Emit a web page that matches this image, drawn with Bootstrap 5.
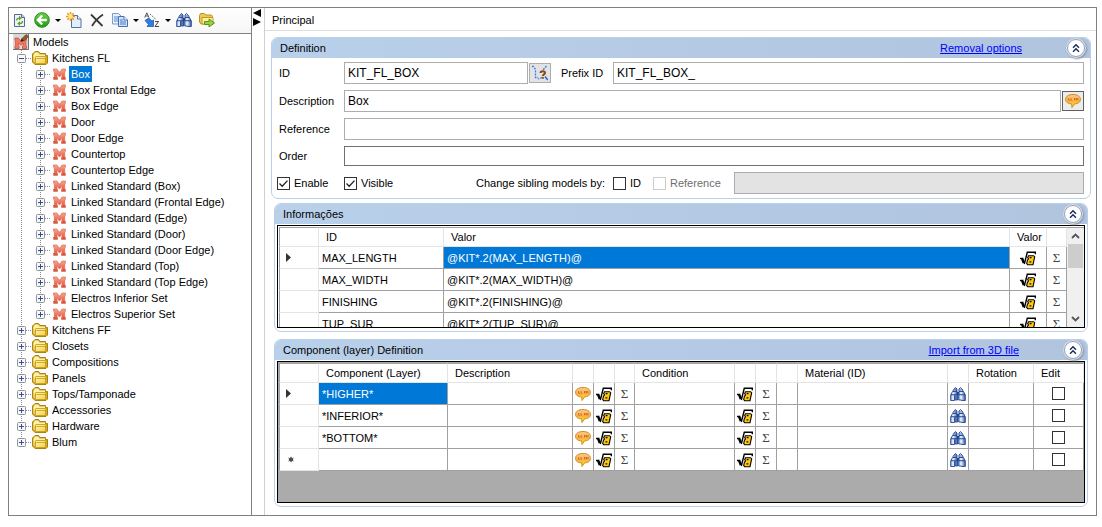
<!DOCTYPE html>
<html lang="en">
<head>
<meta charset="utf-8">
<meta name="viewport" content="width=device-width, initial-scale=1">
<title>Models</title>
<link href="https://cdn.jsdelivr.net/npm/bootstrap@5.3.0/dist/css/bootstrap.min.css" rel="stylesheet">
<style>
  :root { --dots: #8c8c8c; --line: #a0a0a0; --soft: #e4e4e4; --pick: #0078d7; }
  body { font-family: "Liberation Sans", Arial, sans-serif; font-size: 11px; line-height: 16px; color: #000; background: #fff; padding: 7px 5px 8px 8px; }
  svg { display: block; flex: none; }
  button { font: inherit; color: inherit; padding: 0; border: 0; background: none; }
  .app-frame { border: 1px solid #808080; }

  /* left pane */
  .side-pane { width: 243px; flex: none; border-right: 1px solid #808080; }
  .tool-strip { height: 26px; border-bottom: 1px solid #808080; gap: 7px; padding: 0 0 2px 2px; background: linear-gradient(#fff, #f6f6f6); }
  .drop-caret { width: 16px; height: 16px; }
  .drop-caret::after { content: ""; display: block; margin: 1px auto 0; width: 0; border: 3px solid transparent; border-top-color: #000; border-bottom: 0; }
  .tree-line { display: flex; align-items: center; height: 16px; white-space: nowrap; background-repeat: repeat-y; }
  .tree-list > li > .tree-line { padding-left: 8px; background-image: repeating-linear-gradient(var(--dots) 0 1px, transparent 1px 2px); background-size: 1px 2px; background-position: 12px 0; }
  .tree-list > li:last-child > .tree-line { background-size: 1px 8px; background-repeat: no-repeat; }
  .tree-sub > li { background: repeating-linear-gradient(var(--dots) 0 1px, transparent 1px 2px) 12px 0 / 1px 2px repeat-y; }
  .tree-sub > li > .tree-line { padding-left: 27px; background-image: repeating-linear-gradient(var(--dots) 0 1px, transparent 1px 2px); background-size: 1px 2px; background-position: 31px 0; }
  .tree-sub > li:last-child > .tree-line { background-size: 1px 8px; background-repeat: no-repeat; }
  .tree-stem { flex: none; height: 1px; width: 6px; background: repeating-linear-gradient(90deg, var(--dots) 0 1px, transparent 1px 2px); }
  .tree-sub .tree-stem { margin-right: 2px; }
  .tree-text { padding: 0 2px; line-height: 16px; margin-left: 2px; }
  .tree-sub .tree-text { margin-left: 3px; }
  .tree-text.picked { background: var(--pick); color: #fff; }
  .splitter { width: 12px; flex: none; }

  /* right pane */
  .main-pane { border-left: 1px solid #d0d0d0; }
  .tab-strip { height: 23px; border-bottom: 1px solid #dcdcdc; padding: 4px 7px 0; }
  .panel-box { border: 1px solid #b9cfea; border-radius: 7px; overflow: hidden; }
  .panel-wide { margin: 6px 5px 0 6px; }
  .panel-slim { margin: 0 8px 0 9px; }
  .panel-last { margin-top: 7px; }
  .panel-head { height: 20px; background: linear-gradient(90deg, #b9d0eb, #b0c4de); padding: 0 5px 1px 8px; }
  .panel-head a { color: #00f; margin-right: 45px; }
  .fold-btn { width: 18px; height: 18px; border-radius: 50%; background: #fff; border: 1px solid #96a3b8; box-shadow: 0 0 0 1px #d8e0ec, 1px 1px 2px 1px #8492a8; display: grid; place-items: center; }
  .form-area { padding: 4px 6px 4px 7px; gap: 6px; }
  .form-area .cap { width: 65px; flex: none; }
  .text-in { height: 22px; border: 1px solid #abadb3; border-radius: 0; padding: 0 3px; font-size: 12px; color: #000; background: #fff; outline: 0; min-width: 0; }
  .text-in.dark { height: 20px; border-color: #707070; }
  .text-in:disabled { background: #e3e3e3; }
  .id-in { width: 184px; flex: none; }
  .icon-btn { width: 22px; height: 20px; border: 1px solid #adadad; background: #e3e3e3; display: grid; place-items: center; margin-left: 1px; flex: none; }
  .icon-btn.dark { border-color: #606060; background: #ececec; }
  .prefix-cap { width: 62px; padding-left: 10px; flex: none; }
  .check-row { margin-left: -2px; height: 22px; }
  .check-row label { display: flex; align-items: center; gap: 4px; }
  .check-left { width: 336px; flex: none; }
  .check-left label { width: 67px; }
  .ref-check { margin-left: 12px; width: 81px; color: #6d6d6d; }
  .id-check { width: 28px; }
  .tick { appearance: none; width: 13px; height: 13px; margin: 0; border: 1px solid #333; background: #fff center / 11px 11px no-repeat; flex: none; }
  .tick:checked { background-image: url("data:image/svg+xml,%3Csvg xmlns='http://www.w3.org/2000/svg' viewBox='0 0 11 11'%3E%3Cpath d='M1.5 5.5l2.7 2.7 5.3-5.6' fill='none' stroke='%23222' stroke-width='1.3'/%3E%3C/svg%3E"); }
  .tick:disabled { border-color: #ccc; }

  /* grids */
  .grid-box { border: 1px solid #000; margin: 1px 2px 3px 2px; padding: 1px 0 0 1px; overflow: hidden; }
  .grid-short { height: 103px; }
  .grid-tall { height: 142px; background: #ababab; }
  .grid-table { table-layout: fixed; width: 100%; border-collapse: separate; border-spacing: 0; background: #fff; }
  .grid-table th, .grid-table td { height: 22px; padding: 0 3px; border: 0 solid var(--line); border-width: 0 1px 1px 0; white-space: nowrap; overflow: hidden; vertical-align: middle; line-height: 16px; }
  .grid-table thead th { height: 20px; border-top-width: 1px; font-weight: 400; padding-left: 7px; border-right-color: var(--soft); border-bottom-color: var(--soft); border-top-color: var(--line); }
  .grid-table tr > :first-child { border-left-width: 1px; border-right-color: var(--soft); border-bottom-color: var(--soft); padding-left: 5px; }
  .grid-table td.ico { padding: 0; }
  .grid-table td.ico > * { margin: 0 auto; display: block; }
  .grid-table td.picked { background: var(--pick); color: #fff; }
  .grid-table .sum { width: 100%; text-align: center; font-family: "Liberation Serif", serif; font-size: 13px; color: #444; }
  .scroll-bar { width: 17px; flex: none; background: #f0f0f0; border-top: 1px solid var(--line); }
  .scroll-bar button { height: 16px; display: grid; place-items: center; }
  .scroll-thumb { height: 24px; background: #cdcdcd; margin: 0 1px; }
</style>
</head>
<body>
<svg width="0" height="0" class="position-absolute" aria-hidden="true">
  <defs>
    <linearGradient id="gFold" x1="0" y1="0" x2="1" y2="1"><stop offset="0" stop-color="#fffab8"/><stop offset="1" stop-color="#f6cf45"/></linearGradient>
    <linearGradient id="gTalk" x1="0" y1="0" x2="0" y2="1"><stop offset="0" stop-color="#fbc98c"/><stop offset=".5" stop-color="#f9b04a"/><stop offset=".8" stop-color="#ffd91e"/></linearGradient>
    <linearGradient id="gGreen" x1="0" y1="0" x2="0" y2="1"><stop offset="0" stop-color="#6fd04c"/><stop offset="1" stop-color="#1e9a12"/></linearGradient>
    <linearGradient id="gBin" x1="0" y1="0" x2="1" y2="0"><stop offset="0" stop-color="#7fa6dc"/><stop offset=".35" stop-color="#f2f8ff"/><stop offset="1" stop-color="#2c58a8"/></linearGradient>
    <linearGradient id="gM" x1="0" y1="0" x2="0" y2="1"><stop offset="0" stop-color="#f9a68e"/><stop offset="1" stop-color="#dc4a34"/></linearGradient>
    <symbol id="i-folder" viewBox="0 0 16 14"><path d="M.5 11V3L2 1.500 3 .5h3.500L8 2.500h5.500v2h2V12L14 13.500H3z" fill="#d9a920" stroke="#a9820f"/><path d="M1.500 10V4l1.500-2.500h3L7.500 3.500h5.500v1.500H4L2.500 7v4z" fill="#fdf3a8"/><path d="M3.500 11.500V6l1-.5h9v7h-9z" fill="url(#gFold)" stroke="#c59b1e" stroke-width=".8"/><path d="M4.200 7.500h9" fill="none" stroke="#c59b1e" stroke-width=".8"/></symbol>
    <symbol id="i-m" viewBox="0 0 13 12"><path d="M.6 1h3.200l2.700 3.300L9.200 1h3.200v2.200l-.7.500v5l.7.500v2.200H8.500V9.200l.6-.5V6.300L6.500 9 3.900 6.300v2.400l.6.500v2.200H.6V9.200l.7-.5v-5l-.7-.5z" fill="url(#gM)" stroke="#e0705a" stroke-width=".8"/></symbol>
    <symbol id="i-plus" viewBox="0 0 9 9"><rect x=".5" y=".5" width="8" height="8" rx="1" fill="#f8f8f8" stroke="#919191"/><path d="M2 4.500h5M4.500 2v5" stroke="#2c4f9e"/></symbol>
    <symbol id="i-minus" viewBox="0 0 9 9"><rect x=".5" y=".5" width="8" height="8" rx="1" fill="#f8f8f8" stroke="#919191"/><path d="M2 4.500h5" stroke="#2c4f9e"/></symbol>
    <symbol id="i-root" viewBox="0 0 16 16"><path d="M0 0h16v16H0z" fill="#d9d9d9"/><path d="M15.500 0v15.500H0" fill="none" stroke="#707070"/><path d="M2 4h3.300L8 7l2.700-3H13.500v2.500l-.6.500v4.500l.6.500v2.500h-4V12l.7-.5V9L8 11.300 5.300 9v2.500l.7.500v2.500H2V12l.6-.5V7L2 6.500z" fill="#ee7a66" stroke="#cf4d38" stroke-width=".8"/><path d="M8.500 5L13 .5l2.500 2L11 7z" fill="#8a5a2a" stroke="#5b3614" stroke-width=".6"/><path d="M7.500 7.800l1-3L11 7z" fill="#222"/></symbol>
    <symbol id="i-refresh" viewBox="0 0 16 16"><path d="M3.500 2.500h7.500l2.500 3v9h-10z" fill="#eef3fb" stroke="#596a8c"/><path d="M10.500 2.500v3h3" fill="#cfd9ea" stroke="#596a8c"/><path d="M5.500 8.500c0-1.600 1.200-2.300 3-2.300M11.500 9c0 1.800-1.200 2.600-3 2.600" fill="none" stroke="#55a320" stroke-width="1.300"/><path d="M8 3.800l2.700 2.400L8 8.500zM9 14l-2.700-2.400L9 9.300z" fill="#55a320"/></symbol>
    <symbol id="i-back" viewBox="0 0 16 16"><circle cx="8" cy="8" r="7.300" fill="url(#gGreen)" stroke="#2b8a20"/><path d="M8.200 3.500L3.800 8l4.400 4.500M4.500 8h8.300" fill="none" stroke="#fff" stroke-width="2.300"/></symbol>
    <symbol id="i-new" viewBox="0 0 16 16"><path d="M5.500 3.500h6l3.500 3.500v8.500h-9.500z" fill="#e3eefb" stroke="#56719f"/><path d="M11.500 3.500v3.500h3.500" fill="#fff" stroke="#56719f"/><path d="M4.500 0v9M0 4.500h9M1.300 1.300l6.400 6.400M7.700 1.300L1.300 7.700" stroke="#f09018" stroke-width="1.500"/><circle cx="4.500" cy="4.500" r="2.400" fill="#ffe978"/></symbol>
    <symbol id="i-cut" viewBox="0 0 16 16"><path d="M2 2.500c3 3 7 7 11.500 11.500M14 2.500C9.500 5.500 5.500 9.500 3 14" fill="none" stroke="#3a3a3a" stroke-width="1.800"/></symbol>
    <symbol id="i-copy" viewBox="0 0 16 16"><path d="M.5 1.500h6l3 3v7.500h-9z" fill="#e6f0fd" stroke="#7d9ccc"/><path d="M2 5h4M2 7h4M2 9h4" stroke="#5d8bd0"/><path d="M6.500 4.500h5.500l3.500 3.500v6.500h-9z" fill="#cfe2fb" stroke="#4a6fae"/><path d="M12 4.500v3.500h3.500" fill="#fff" stroke="#4a6fae"/><path d="M8 8h3M8 10h6M8 12h6" stroke="#4a7dcc"/></symbol>
    <symbol id="i-sort" viewBox="0 0 16 16"><path d="M.7 5.500L2.800.8 5 5.500M1.500 4h2.700" fill="none" stroke="#555"/><path d="M11 9.500h3.500l-3.500 5h4" fill="none" stroke="#444"/><path d="M6 2l6 5.500" fill="none" stroke="#666" stroke-dasharray="1.500 1"/><path d="M1 8.500L4.500 6 8 9l1.500-1v6.500H3l1.500-2z" fill="#2e7fe0" stroke="#174f9e" stroke-width=".7"/></symbol>
    <symbol id="i-bin" viewBox="0 0 16 16"><path d="M7 6h2.500v3H7z" fill="#1d3f86"/><path d="M4 3l1.500-1.500L7 3v3l.5 2.500v5.500H5.200V9.500H4.500V14.500H.7V9L2.500 5.500z" fill="url(#gBin)" stroke="#24468e" stroke-width=".9"/><path d="M9 3l1.500-1.500L12 3l1.500 2.500L15.300 9v5.500H11.500V14H8.700V8.500L9 6z" fill="url(#gBin)" stroke="#24468e" stroke-width=".9"/><path d="M3 5.500h4M9 5.500h4M1 8.700h6.500M8.800 8.700h6.300" stroke="#24468e" stroke-width="1.100"/><path d="M5 2.500v3M11 2.500v3" stroke="#4e7cc4"/></symbol>
    <symbol id="i-go" viewBox="0 0 16 16"><path d="M.5 10V3.500L1.500 1.500h4L7 3h5.500l1 1.500V11l-1 1H2z" fill="#efc850" stroke="#bb9220"/><path d="M3 5.500h11v6.500H3z" fill="#fff0a0" stroke="#c39a25"/><path d="M5.500 9.500h4.500V7l5.500 4-5.500 4v-2.500H5.500z" fill="#9ad03c" stroke="#4e8a17" stroke-width=".9"/></symbol>
    <symbol id="i-talk" viewBox="0 0 16 14"><path d="M8 .5c4.500 0 7.500 2 7.500 4.900 0 2.700-2.600 4.300-6 4.500L7 13.500l-.3-3.600C3 9.700.5 8 .5 5.400.5 2.500 3.500.5 8 .5z" fill="url(#gTalk)" stroke="#c98d22"/><path d="M3.500 4v2.200H5M6 4v2.200h1M9.500 4v2.300M11.300 4v2.300M13 4v2.300M9 5h4" fill="none" stroke="#cf6a20" stroke-width=".9"/></symbol>
    <symbol id="i-root2" viewBox="0 0 16 16"><path d="M8.500 5.700h5l1.200 1-1.700 8H7.700L6.700 13.500l.7-3.200L8.500 9 7.700 7.500z" fill="#ffc814" stroke="#000" stroke-width="1.100"/><path d="M9.700 7.700h1.800M9.500 11.800h1.800" stroke="#000" stroke-width="1.200"/><path d="M0 8.500h2.500" stroke="#000" stroke-width="1.400"/><path d="M2 8l1.800 5" stroke="#000" stroke-width="2.400"/><path d="M4.300 14L7.300 2.300H15.300v2" fill="none" stroke="#000" stroke-width="1.400"/></symbol>
    <symbol id="i-pick" viewBox="0 0 16 16"><path d="M0 1.500h1.500l2 3v8H6M14.500 1l-4 4.500M10 12.500l-4 1.500" fill="none" stroke="#3a7be8" stroke-width="1.300" stroke-dasharray="2 1"/><path d="M8.500 8c0-2.300 4.500-2.300 4.500 0 0 1.500-2.200 1.300-2.200 3M10.800 12v1.800" fill="none" stroke="#8a4b10" stroke-width="2"/><path d="M13 11.500l2.800 3.500" stroke="#2f62d8" stroke-width="1.500"/></symbol>
    <symbol id="i-fold" viewBox="0 0 10 10"><path d="M2 4.800l3-3 3 3M2 8.800l3-3 3 3" fill="none" stroke="#1d2f63" stroke-width="1.500"/></symbol>
  </defs>
</svg>

<div class="app-frame d-flex">
  <aside class="side-pane">
    <div class="tool-strip d-flex align-items-center" role="toolbar" aria-label="Model tools">
      <button type="button" aria-label="Refresh"><svg width="16" height="16"><use href="#i-refresh"/></svg></button>
      <div class="d-flex"><button type="button" aria-label="Back"><svg width="16" height="16"><use href="#i-back"/></svg></button><button type="button" class="drop-caret" aria-label="Back list"></button><button type="button" aria-label="New"><svg width="16" height="16"><use href="#i-new"/></svg></button></div>
      <button type="button" aria-label="Delete"><svg width="16" height="16"><use href="#i-cut"/></svg></button>
      <div class="d-flex"><button type="button" aria-label="Copy"><svg width="16" height="16"><use href="#i-copy"/></svg></button><button type="button" class="drop-caret" aria-label="Copy list"></button><button type="button" aria-label="Sort"><svg width="16" height="16"><use href="#i-sort"/></svg></button><button type="button" class="drop-caret" aria-label="Sort list"></button><button type="button" aria-label="Find"><svg width="16" height="16"><use href="#i-bin"/></svg></button></div>
      <button type="button" aria-label="Move to folder"><svg width="16" height="16"><use href="#i-go"/></svg></button>
    </div>
    <div class="d-flex align-items-center ps-1"><svg width="16" height="16"><use href="#i-root"/></svg><span class="tree-text">Models</span></div>
    <ul class="tree-list list-unstyled mb-0" id="tree"></ul>
  </aside>

  <div class="splitter">
    <svg width="12" height="19" viewBox="0 0 12 19"><path d="M9 1v8L1 5zM1 10v8l8-4z"/></svg>
  </div>

  <main class="main-pane flex-grow-1 pb-2">
    <div class="tab-strip">Principal</div>

    <section class="panel-box panel-wide">
      <div class="panel-head d-flex align-items-center">
        <span class="me-auto">Definition</span>
        <a href="#">Removal options</a>
        <button type="button" class="fold-btn" aria-label="Collapse Definition"><svg width="10" height="10"><use href="#i-fold"/></svg></button>
      </div>
      <form class="form-area d-flex flex-column">
        <div class="d-flex align-items-center">
          <label class="cap" for="fId">ID</label>
          <input class="text-in id-in" id="fId" value="KIT_FL_BOX">
          <button type="button" class="icon-btn" aria-label="Pick ID"><svg width="16" height="16"><use href="#i-pick"/></svg></button>
          <label class="prefix-cap" for="fPrefix">Prefix ID</label>
          <input class="text-in flex-grow-1" id="fPrefix" value="KIT_FL_BOX_">
        </div>
        <div class="d-flex align-items-center">
          <label class="cap" for="fDesc">Description</label>
          <input class="text-in flex-grow-1" id="fDesc" value="Box">
          <button type="button" class="icon-btn dark" aria-label="Translate"><svg width="16" height="14"><use href="#i-talk"/></svg></button>
        </div>
        <div class="d-flex align-items-center">
          <label class="cap" for="fRef">Reference</label>
          <input class="text-in flex-grow-1" id="fRef">
        </div>
        <div class="d-flex align-items-center">
          <label class="cap" for="fOrder">Order</label>
          <input class="text-in dark flex-grow-1" id="fOrder">
        </div>
        <div class="check-row d-flex align-items-center">
          <div class="check-left d-flex">
            <label><input type="checkbox" class="tick" checked>Enable</label>
            <label><input type="checkbox" class="tick" checked>Visible</label>
            <span class="ms-auto pe-2">Change sibling models by:</span>
          </div>
          <label class="id-check"><input type="checkbox" class="tick">ID</label>
          <label class="ref-check"><input type="checkbox" class="tick" disabled>Reference</label>
          <input class="text-in flex-grow-1" disabled aria-label="Sibling value">
        </div>
      </form>
    </section>

    <section class="panel-box panel-slim mt-1">
      <div class="panel-head d-flex align-items-center">
        <span class="me-auto">Informações</span>
        <button type="button" class="fold-btn" aria-label="Collapse Informações"><svg width="10" height="10"><use href="#i-fold"/></svg></button>
      </div>
      <div class="grid-box grid-short d-flex">
        <div class="flex-grow-1 overflow-hidden">
          <table class="grid-table">
            <colgroup><col style="width:40px"><col style="width:125px"><col><col style="width:37px"><col style="width:20px"></colgroup>
            <thead><tr><th></th><th>ID</th><th>Valor</th><th>Valor</th><th></th></tr></thead>
            <tbody id="infoRows"></tbody>
          </table>
        </div>
        <div class="scroll-bar d-flex flex-column">
          <button type="button" aria-label="Scroll up"><svg width="9" height="6"><path d="M1 5l3.500-3.500L8 5" fill="none" stroke="#555" stroke-width="1.800"/></svg></button>
          <div class="scroll-thumb"></div>
          <button type="button" class="mt-auto" aria-label="Scroll down"><svg width="9" height="6"><path d="M1 1l3.500 3.500L8 1" fill="none" stroke="#555" stroke-width="1.800"/></svg></button>
        </div>
      </div>
    </section>

    <section class="panel-box panel-slim panel-last">
      <div class="panel-head d-flex align-items-center">
        <span class="me-auto">Component (layer) Definition</span>
        <a href="#">Import from 3D file</a>
        <button type="button" class="fold-btn" aria-label="Collapse Component Definition"><svg width="10" height="10"><use href="#i-fold"/></svg></button>
      </div>
      <div class="grid-box grid-tall">
        <table class="grid-table">
          <colgroup><col style="width:40px"><col style="width:129px"><col style="width:125px"><col style="width:21px"><col style="width:21px"><col style="width:20px"><col style="width:100px"><col style="width:21px"><col style="width:21px"><col style="width:21px"><col><col style="width:21px"><col style="width:65px"><col style="width:50px"></colgroup>
          <thead><tr><th></th><th>Component (Layer)</th><th>Description</th><th></th><th></th><th></th><th>Condition</th><th></th><th></th><th></th><th>Material (ID)</th><th></th><th>Rotation</th><th>Edit</th></tr></thead>
          <tbody id="layerRows"></tbody>
        </table>
      </div>
    </section>
  </main>
</div>

<script src="https://cdn.jsdelivr.net/npm/bootstrap@5.3.0/dist/js/bootstrap.bundle.min.js"></script>
<script>
  const icon = (id, w, h) => `<svg width="${w}" height="${h}"><use href="#i-${id}"/></svg>`;
  const arrow = '<svg width="6" height="9"><path d="M1 0l5 4.500-5 4.500z" fill="#333"/></svg>';
  const star = '<svg width="10" height="7" viewBox="0 0 10 7"><circle cx="6" cy="3.500" r="2" fill="#333"/><path d="M6 .8v5.400M3.500 2l5 3M8.500 2l-5 3" stroke="#555"/></svg>';

  const models = ['Box', 'Box Frontal Edge', 'Box Edge', 'Door', 'Door Edge', 'Countertop', 'Countertop Edge',
    'Linked Standard (Box)', 'Linked Standard (Frontal Edge)', 'Linked Standard (Edge)', 'Linked Standard (Door)',
    'Linked Standard (Door Edge)', 'Linked Standard (Top)', 'Linked Standard (Top Edge)',
    'Electros Inferior Set', 'Electros Superior Set'];
  const folders = ['Kitchens FL', 'Kitchens FF', 'Closets', 'Compositions', 'Panels', 'Tops/Tamponade', 'Accessories', 'Hardware', 'Blum'];

  const line = (box, pic, text, on) =>
    `<div class="tree-line">${icon(box, 9, 9)}<span class="tree-stem"></span>${pic}<span class="tree-text${on ? ' picked' : ''}">${text}</span></div>`;
  document.getElementById('tree').innerHTML = folders.map((f, i) =>
    `<li>${line(i ? 'plus' : 'minus', icon('folder', 16, 14), f)}${i ? '' :
      `<ul class="tree-sub list-unstyled">${models.map((m, j) => `<li>${line('plus', icon('m', 13, 12), m, j === 0)}</li>`).join('')}</ul>`}</li>`).join('');

  const root = `<td class="ico"><button type="button" aria-label="Formula">${icon('root2', 16, 16)}</button></td>`;
  const sum = '<td class="ico"><button type="button" class="sum">Σ</button></td>';

  document.getElementById('infoRows').innerHTML = ['MAX_LENGTH', 'MAX_WIDTH', 'FINISHING', 'TUP_SUR'].map((n, i) =>
    `<tr><td>${i ? '' : arrow}</td><td>${n}</td><td class="${i ? '' : 'picked'}">@KIT*.2(${n})@</td>${root}${sum}</tr>`).join('');

  document.getElementById('layerRows').innerHTML = ['*HIGHER*', '*INFERIOR*', '*BOTTOM*', ''].map((n, i) =>
    `<tr><td>${i === 0 ? arrow : i === 3 ? star : ''}</td><td class="${i ? '' : 'picked'}">${n}</td><td></td>
     <td class="ico"><button type="button" aria-label="Translate">${icon('talk', 16, 14)}</button></td>${root}${sum}<td></td>${root}${sum}<td></td><td></td>
     <td class="ico"><button type="button" aria-label="Find material">${icon('bin', 16, 16)}</button></td><td></td>
     <td class="ico"><input type="checkbox" class="tick" aria-label="Edit"></td></tr>`).join('');
</script>
</body>
</html>
